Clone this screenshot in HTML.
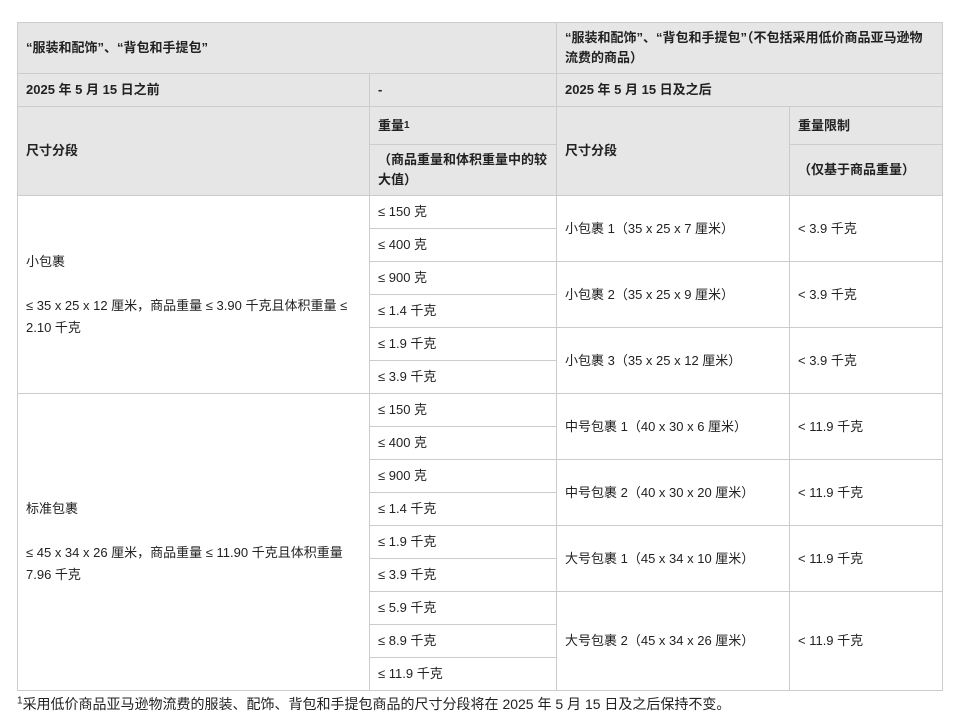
<!DOCTYPE html>
<html><head><meta charset="utf-8"><style>
body{margin:0;width:964px;height:724px;background:#fff;position:relative;overflow:hidden;font-family:"Liberation Sans","Noto Sans CJK SC",sans-serif;color:#222;font-size:13px}
.c{position:absolute;box-sizing:border-box;border:1px solid #ccc;display:flex;align-items:center;padding:0 8px;line-height:20px}
.h{background:#e6e6e6;font-weight:bold}
.fn{position:absolute;left:17px;top:694px;font-size:14px;white-space:nowrap}
sup{font-size:10px;line-height:0}
</style></head><body>
<div class="c h" style="left:17px;top:22px;width:540px;height:52px">“服装和配饰”、“背包和手提包”</div>
<div class="c h" style="left:556px;top:22px;width:387px;height:52px">“服装和配饰”、“背包和手提包”（不包括采用低价商品亚马逊物流费的商品）</div>
<div class="c h" style="left:17px;top:73px;width:353px;height:34px">2025 年 5 月 15 日之前</div>
<div class="c h" style="left:369px;top:73px;width:188px;height:34px">-</div>
<div class="c h" style="left:556px;top:73px;width:387px;height:34px">2025 年 5 月 15 日及之后</div>
<div class="c h" style="left:17px;top:106px;width:353px;height:90px">尺寸分段</div>
<div class="c h" style="left:369px;top:106px;width:188px;height:39px">重量<sup>1</sup></div>
<div class="c h" style="left:369px;top:144px;width:188px;height:52px">（商品重量和体积重量中的较大值）</div>
<div class="c h" style="left:556px;top:106px;width:234px;height:90px">尺寸分段</div>
<div class="c h" style="left:789px;top:106px;width:154px;height:39px">重量限制</div>
<div class="c h" style="left:789px;top:144px;width:154px;height:52px">（仅基于商品重量）</div>

<div class="c" style="left:17px;top:195px;width:353px;height:199px;line-height:22px;padding-right:14px">小包裹<br><br>≤ 35 x 25 x 12 厘米，商品重量 ≤ 3.90 千克且体积重量 ≤ 2.10 千克</div>
<div class="c" style="left:17px;top:393px;width:353px;height:298px;line-height:22px;padding-right:14px">标准包裹<br><br>≤ 45 x 34 x 26 厘米，商品重量 ≤ 11.90 千克且体积重量 7.96 千克</div>

<div class="c" style="left:369px;top:195px;width:188px;height:34px">≤ 150 克</div>
<div class="c" style="left:369px;top:228px;width:188px;height:34px">≤ 400 克</div>
<div class="c" style="left:369px;top:261px;width:188px;height:34px">≤ 900 克</div>
<div class="c" style="left:369px;top:294px;width:188px;height:34px">≤ 1.4 千克</div>
<div class="c" style="left:369px;top:327px;width:188px;height:34px">≤ 1.9 千克</div>
<div class="c" style="left:369px;top:360px;width:188px;height:34px">≤ 3.9 千克</div>
<div class="c" style="left:369px;top:393px;width:188px;height:34px">≤ 150 克</div>
<div class="c" style="left:369px;top:426px;width:188px;height:34px">≤ 400 克</div>
<div class="c" style="left:369px;top:459px;width:188px;height:34px">≤ 900 克</div>
<div class="c" style="left:369px;top:492px;width:188px;height:34px">≤ 1.4 千克</div>
<div class="c" style="left:369px;top:525px;width:188px;height:34px">≤ 1.9 千克</div>
<div class="c" style="left:369px;top:558px;width:188px;height:34px">≤ 3.9 千克</div>
<div class="c" style="left:369px;top:591px;width:188px;height:34px">≤ 5.9 千克</div>
<div class="c" style="left:369px;top:624px;width:188px;height:34px">≤ 8.9 千克</div>
<div class="c" style="left:369px;top:657px;width:188px;height:34px">≤ 11.9 千克</div>

<div class="c" style="left:556px;top:195px;width:234px;height:67px">小包裹 1（35 x 25 x 7 厘米）</div>
<div class="c" style="left:556px;top:261px;width:234px;height:67px">小包裹 2（35 x 25 x 9 厘米）</div>
<div class="c" style="left:556px;top:327px;width:234px;height:67px">小包裹 3（35 x 25 x 12 厘米）</div>
<div class="c" style="left:556px;top:393px;width:234px;height:67px">中号包裹 1（40 x 30 x 6 厘米）</div>
<div class="c" style="left:556px;top:459px;width:234px;height:67px">中号包裹 2（40 x 30 x 20 厘米）</div>
<div class="c" style="left:556px;top:525px;width:234px;height:67px">大号包裹 1（45 x 34 x 10 厘米）</div>
<div class="c" style="left:556px;top:591px;width:234px;height:100px">大号包裹 2（45 x 34 x 26 厘米）</div>

<div class="c" style="left:789px;top:195px;width:154px;height:67px">&lt; 3.9 千克</div>
<div class="c" style="left:789px;top:261px;width:154px;height:67px">&lt; 3.9 千克</div>
<div class="c" style="left:789px;top:327px;width:154px;height:67px">&lt; 3.9 千克</div>
<div class="c" style="left:789px;top:393px;width:154px;height:67px">&lt; 11.9 千克</div>
<div class="c" style="left:789px;top:459px;width:154px;height:67px">&lt; 11.9 千克</div>
<div class="c" style="left:789px;top:525px;width:154px;height:67px">&lt; 11.9 千克</div>
<div class="c" style="left:789px;top:591px;width:154px;height:100px">&lt; 11.9 千克</div>

<div class="fn"><sup>1</sup>采用低价商品亚马逊物流费的服装、配饰、背包和手提包商品的尺寸分段将在 2025 年 5 月 15 日及之后保持不变。</div>
</body></html>
